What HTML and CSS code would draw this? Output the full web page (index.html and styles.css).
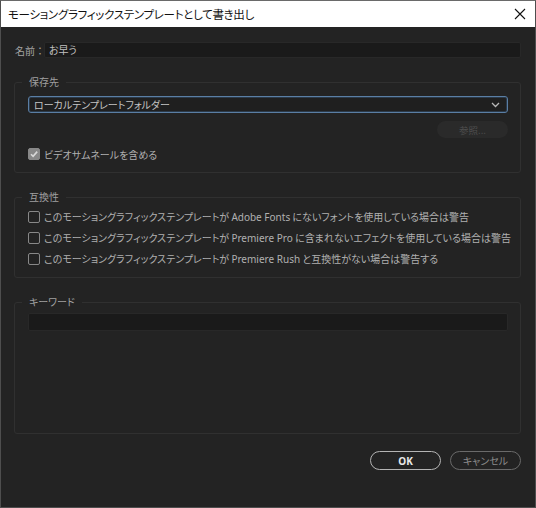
FILE: index.html
```html
<!DOCTYPE html>
<html lang="ja">
<head>
<meta charset="utf-8">
<title>モーショングラフィックステンプレートとして書き出し</title>
<link rel="stylesheet" href="styles.css">
</head>
<body>
<div class="window">
  <div class="titlebar">
    <span class="title">モーショングラフィックステンプレートとして書き出し</span>
    <svg class="close" width="12" height="12" viewBox="0 0 12 12"><path d="M1 1 L11 11 M11 1 L1 11" stroke="#111" stroke-width="1.1" fill="none"/></svg>
  </div>
  <div class="content">
    <div class="name-row">
      <span class="name-label">名前：</span>
      <div class="text-input name-input">お早う</div>
    </div>

    <fieldset class="group group-dest">
      <legend>保存先</legend>
      <div class="select">
        <span>ローカルテンプレートフォルダー</span>
        <svg class="chev" width="9" height="6" viewBox="0 0 9 6"><path d="M1 1 L4.5 4.5 L8 1" stroke="#b8b8b8" stroke-width="1.3" fill="none"/></svg>
      </div>
      <div class="browse-row"><span class="btn-browse">参照...</span></div>
      <label class="check-row">
        <span class="box checked"><svg width="10" height="10" viewBox="0 0 10 10"><path d="M2 5.2 L4.1 7.3 L8.2 2.6" stroke="#d8d8d8" stroke-width="1.6" fill="none"/></svg></span>
        <span>ビデオサムネールを含める</span>
      </label>
    </fieldset>

    <fieldset class="group group-compat">
      <legend>互換性</legend>
      <label class="check-row row-compat"><span class="box"></span><span>このモーショングラフィックステンプレートが <span class="lat">Adobe Fonts</span> にないフォントを使用している場合は警告</span></label>
      <label class="check-row row-compat"><span class="box"></span><span>このモーショングラフィックステンプレートが <span class="lat">Premiere Pro</span> に含まれないエフェクトを使用している場合は警告</span></label>
      <label class="check-row row-compat"><span class="box"></span><span>このモーショングラフィックステンプレートが <span class="lat">Premiere Rush</span> と互換性がない場合は警告する</span></label>
    </fieldset>

    <fieldset class="group group-keyword">
      <legend>キーワード</legend>
      <div class="text-input keyword-input"></div>
    </fieldset>

    <div class="buttons">
      <span class="btn btn-ok">OK</span>
      <span class="btn btn-cancel">キャンセル</span>
    </div>
  </div>
</div>
</body>
</html>
```

FILE: styles.css
```css
html, body {
  margin: 0;
  padding: 0;
  background: #232323;
}
body {
  font-family: "Noto Sans CJK JP", "Noto Sans", sans-serif;
  font-size: 10px;
  color: #b0b0b0;
  font-feature-settings: "palt";
}
.window {
  width: 536px;
  height: 508px;
  box-sizing: border-box;
  border: 1px solid #4e4e4e;
  border-top-color: #6a6a6a;
  background: #232323;
  overflow: hidden;
}
.titlebar {
  height: 26px;
  background: #ffffff;
  display: flex;
  align-items: center;
  justify-content: space-between;
  padding: 0 8px 0 7px;
}
.title {
  color: #111;
  font-size: 11.5px;
  letter-spacing: -0.3px;
}
.close {
  display: block;
  margin-right: 1px;
}
.content {
  padding: 15px 14px 0 13px;
}
.name-row {
  display: flex;
  align-items: center;
  height: 16px;
}
.name-label {
  width: 29px;
  flex: none;
  padding-left: 1px;
  color: #a4a4a4;
  font-feature-settings: normal;
  white-space: nowrap;
}
.text-input {
  background: #1a1a1a;
  border: 1px solid #282828;
  border-radius: 2px;
  box-sizing: border-box;
  color: #c0c0c0;
}
.name-input {
  flex: 1;
  height: 16px;
  line-height: 14px;
  padding-left: 4px;
}
.group {
  margin: 0;
  border: 1px solid #303030;
  border-radius: 3px;
  padding: 0 12px 0 13px;
  min-width: 0;
}
.group legend {
  padding: 0 7px 0 7px;
  margin-left: -6px;
  line-height: 14px;
  color: #a0a0a0;
}
.group-dest {
  margin-top: 17px;
  padding-top: 7px;
  padding-bottom: 11px;
}
.select {
  height: 17px;
  box-sizing: border-box;
  border: 1px solid #5a7ea4;
  box-shadow: inset 0 0 0 1px #2b3a4a;
  border-radius: 3px;
  background: #1f1f1f;
  display: flex;
  align-items: center;
  justify-content: space-between;
  padding: 0 7px 0 5px;
  color: #c4c4c4;
}
.chev { display: block; }
.browse-row {
  display: flex;
  justify-content: flex-end;
  margin-top: 8px;
}
.btn-browse {
  width: 71px;
  height: 17px;
  border-radius: 9px;
  background: #2a2a2a;
  color: #4e4e4e;
  display: flex;
  align-items: center;
  justify-content: center;
  font-size: 9.5px;
}
.check-row {
  display: flex;
  align-items: center;
  gap: 4px;
  white-space: nowrap;
}
.group-dest .check-row {
  margin-top: 9px;
  height: 14px;
}
.box {
  width: 12px;
  height: 12px;
  box-sizing: border-box;
  border: 1.5px solid #888888;
  border-radius: 2px;
  flex: none;
  display: flex;
  align-items: center;
  justify-content: center;
}
.box.checked {
  background: #888888;
  border-color: #888888;
}
.box svg { display: block; }
.group-compat {
  margin-top: 17px;
  padding-top: 2px;
  padding-bottom: 8px;
}
.row-compat {
  height: 21px;
}
.lat {
  font-family: "Noto Sans", sans-serif;
  font-size: 10px;
}
.group-keyword {
  margin-top: 17px;
  padding-top: 4px;
  padding-bottom: 102px;
}
.keyword-input {
  height: 18px;
}
.buttons {
  display: flex;
  justify-content: flex-end;
  gap: 9px;
  margin-top: 17px;
}
.btn {
  width: 71px;
  height: 19px;
  box-sizing: border-box;
  border-radius: 10px;
  display: flex;
  align-items: center;
  justify-content: center;
}
.btn-ok {
  border: 1.5px solid #b4b4b4;
  color: #e8e8e8;
  font-weight: bold;
  font-family: "Noto Sans", sans-serif;
  font-size: 10px;
}
.btn-cancel {
  border: 1.5px solid #6a6a6a;
  color: #8c8c8c;
}
```
